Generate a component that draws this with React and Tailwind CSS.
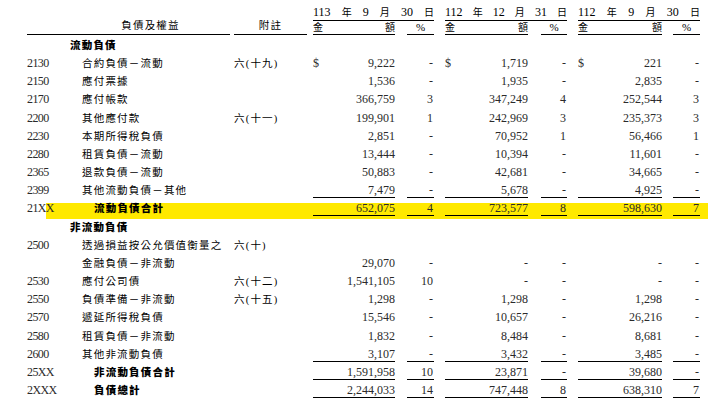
import React from 'react';

const GROUPS = [
  { amt: 'w-[82px]', gap: 'w-[12px]', pct: 'w-[27px]', date: ['113', '年', '9', '月', '30', '日'] },
  { amt: 'w-[83px]', gap: 'w-[13px]', pct: 'w-[26px]', date: ['112', '年', '12', '月', '31', '日'] },
  { amt: 'w-[84px]', gap: 'w-[11px]', pct: 'w-[27px]', date: ['112', '年', '9', '月', '30', '日'] },
];

const rows = [
  { kind: 'section', name: '流動負債' },
  { code: '2130', name: '合約負債－流動', note: '六(十九)', dollar: true, v: ['9,222', '-', '1,719', '-', '221', '-'] },
  { code: '2150', name: '應付票據', v: ['1,536', '-', '1,935', '-', '2,835', '-'] },
  { code: '2170', name: '應付帳款', v: ['366,759', '3', '347,249', '4', '252,544', '3'] },
  { code: '2200', name: '其他應付款', note: '六(十一)', v: ['199,901', '1', '242,969', '3', '235,373', '3'] },
  { code: '2230', name: '本期所得稅負債', v: ['2,851', '-', '70,952', '1', '56,466', '1'] },
  { code: '2280', name: '租賃負債－流動', v: ['13,444', '-', '10,394', '-', '11,601', '-'] },
  { code: '2365', name: '退款負債－流動', v: ['50,883', '-', '42,681', '-', '34,665', '-'] },
  { code: '2399', name: '其他流動負債－其他', line: true, v: ['7,479', '-', '5,678', '-', '4,925', '-'] },
  { kind: 'total', code: '21XX', name: '流動負債合計', line: true, mark: true, v: ['652,075', '4', '723,577', '8', '598,630', '7'] },
  { kind: 'section', name: '非流動負債' },
  { code: '2500', name: '透過損益按公允價值衡量之', note: '六(十)' },
  { name: '金融負債－非流動', v: ['29,070', '-', '-', '-', '-', '-'] },
  { code: '2530', name: '應付公司債', note: '六(十二)', v: ['1,541,105', '10', '-', '-', '-', '-'] },
  { code: '2550', name: '負債準備－非流動', note: '六(十五)', v: ['1,298', '-', '1,298', '-', '1,298', '-'] },
  { code: '2570', name: '遞延所得稅負債', v: ['15,546', '-', '10,657', '-', '26,216', '-'] },
  { code: '2580', name: '租賃負債－非流動', v: ['1,832', '-', '8,484', '-', '8,681', '-'] },
  { code: '2600', name: '其他非流動負債', line: true, v: ['3,107', '-', '3,432', '-', '3,485', '-'] },
  { kind: 'total', code: '25XX', name: '非流動負債合計', line: true, v: ['1,591,958', '10', '23,871', '-', '39,680', '-'] },
  { kind: 'total', code: '2XXX', name: '負債總計', line: true, v: ['2,244,033', '14', '747,448', '8', '638,310', '7'] },
];

const cjk = 'text-[10.5px] tracking-[1.2px]';

function Header() {
  return (
    <div className="flex h-[35px] pl-[27px]">
      <div className={`mr-[4px] flex w-[203px] items-end justify-center border-b border-black pb-[2px] pl-[44px] leading-[12px] ${cjk}`}>
        負債及權益
      </div>
      <div className={`mr-[6px] flex w-[73px] items-end justify-center border-b border-black pb-[2px] leading-[12px] ${cjk}`}>
        附註
      </div>
      {GROUPS.map((g, i) => (
        <React.Fragment key={i}>
          <div className="flex flex-col">
            <div className="flex h-[21px] items-end justify-between border-b border-black pb-[1px] text-[12px] leading-[13px]">
              {g.date.map((d, j) => (
                <span key={j} className={/\d/.test(d) ? '' : 'text-[10px]'}>{d}</span>
              ))}
            </div>
            <div className="flex h-[14px]">
              <div className={`flex ${g.amt} justify-between border-b border-black text-[10px] leading-[13px]`}>
                <span>金</span>
                <span>額</span>
              </div>
              <div className={g.gap} />
              <div className={`${g.pct} border-b border-black text-center text-[11px] leading-[13px]`}>%</div>
            </div>
          </div>
          {i < 2 && <div className="w-[11px] shrink-0" />}
        </React.Fragment>
      ))}
    </div>
  );
}

function Row({ r }) {
  const b = r.line ? 'border-b border-black' : '';
  const namePad = r.kind === 'section' ? 'pl-0 font-black' : r.kind === 'total' ? 'pl-[24px] font-black' : 'pl-[12px]';
  return (
    <div
      className={`flex h-[18.17px] items-start pl-[27px] ${
        r.mark
          ? 'bg-[linear-gradient(to_right,transparent_46px,#ffe900_46px,#ffe900_708px,transparent_708px)] bg-[length:100%_16px] bg-bottom bg-no-repeat'
          : ''
      }`}
    >
      <div className="h-[16px] w-[43px] shrink-0 text-[12px] leading-[17px] tracking-[-0.6px] text-[#2a2a2a]">{r.code}</div>
      <div className={`h-[16px] w-[164px] shrink-0 whitespace-nowrap leading-[17px] ${cjk} ${namePad}`}>{r.name}</div>
      <div className={`h-[16px] w-[79px] shrink-0 whitespace-nowrap leading-[17px] ${cjk} tracking-[0.5px]`}>{r.note}</div>
      {r.v &&
        GROUPS.map((g, i) => (
          <React.Fragment key={i}>
            <div className={`flex h-[16px] ${g.amt} shrink-0 justify-between text-[12px] leading-[17px] text-[#2a2a2a] ${b}`}>
              <span>{r.dollar ? '$' : ''}</span>
              <span>{r.v[i * 2]}</span>
            </div>
            <div className={`${g.gap} shrink-0`} />
            <div className={`h-[16px] ${g.pct} shrink-0 pr-[1px] text-right text-[12px] leading-[17px] text-[#2a2a2a] ${b}`}>
              {r.v[i * 2 + 1]}
            </div>
            {i < 2 && <div className="w-[11px] shrink-0" />}
          </React.Fragment>
        ))}
    </div>
  );
}

export default function App() {
  return (
    <div className="h-[400px] w-[712px] overflow-hidden bg-white font-['Liberation_Serif','Noto_Sans_CJK_TC',serif] text-black">
      <Header />
      <div className="mt-[2px]">
        {rows.map((r, i) => (
          <Row key={i} r={r} />
        ))}
      </div>
    </div>
  );
}
